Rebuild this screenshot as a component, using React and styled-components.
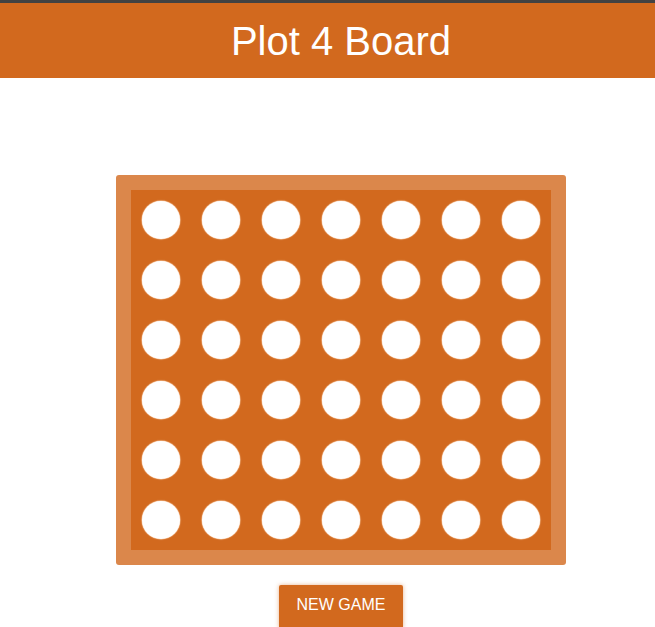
import React from "react";
import styled, { createGlobalStyle } from "styled-components";

const Global = createGlobalStyle`
  html, body { margin: 0; padding: 0; background: #fff; }
  body { font-family: "Liberation Sans", Arial, sans-serif; overflow: hidden; }
`;

const Page = styled.div`
  display: flex;
  flex-direction: column;
  align-items: center;
  border-top: 3px solid #424242;
`;

const Header = styled.header`
  align-self: stretch;
  height: 75px;
  background: #d2691e;
  display: flex;
  align-items: center;
  justify-content: center;
  padding-left: 27px;
`;

const Title = styled.h1`
  margin: 0;
  font-weight: 400;
  font-size: 40px;
  color: #fff;
  line-height: 1;
`;

const Main = styled.main`
  align-self: stretch;
  display: flex;
  flex-direction: column;
  align-items: center;
  padding: 97px 0 0 27px;
  gap: 20px;
`;

const Frame = styled.div`
  background: #db874b;
  border-radius: 3px;
  padding: 15px;
`;

const Grid = styled.div`
  display: grid;
  grid-template-columns: repeat(7, 60px);
  grid-auto-rows: 60px;
  background: #d2691e;
`;

const Cell = styled.div`
  display: flex;
  align-items: center;
  justify-content: center;
`;

const Hole = styled.div`
  width: 38px;
  height: 38px;
  border-radius: 50%;
  background: #fff;
  box-shadow: 0 0 1px 0.5px rgba(255, 220, 190, 0.9);
`;

const Button = styled.button`
  height: 44px;
  padding: 0 18px 4px;
  border: none;
  border-radius: 2px;
  background: #d2691e;
  color: #fff;
  font-family: "Liberation Sans", Arial, sans-serif;
  font-size: 16px;
  text-transform: uppercase;
  box-shadow: 0 0 4px rgba(210, 105, 30, 0.5);
  cursor: pointer;
`;

export default function App() {
  const cells = Array.from({ length: 42 }, (_, i) => i);
  return (
    <>
      <Global />
      <Page>
        <Header>
          <Title>Plot 4 Board</Title>
        </Header>
        <Main>
          <Frame>
            <Grid>
              {cells.map((i) => (
                <Cell key={i}>
                  <Hole />
                </Cell>
              ))}
            </Grid>
          </Frame>
          <Button>New Game</Button>
        </Main>
      </Page>
    </>
  );
}
